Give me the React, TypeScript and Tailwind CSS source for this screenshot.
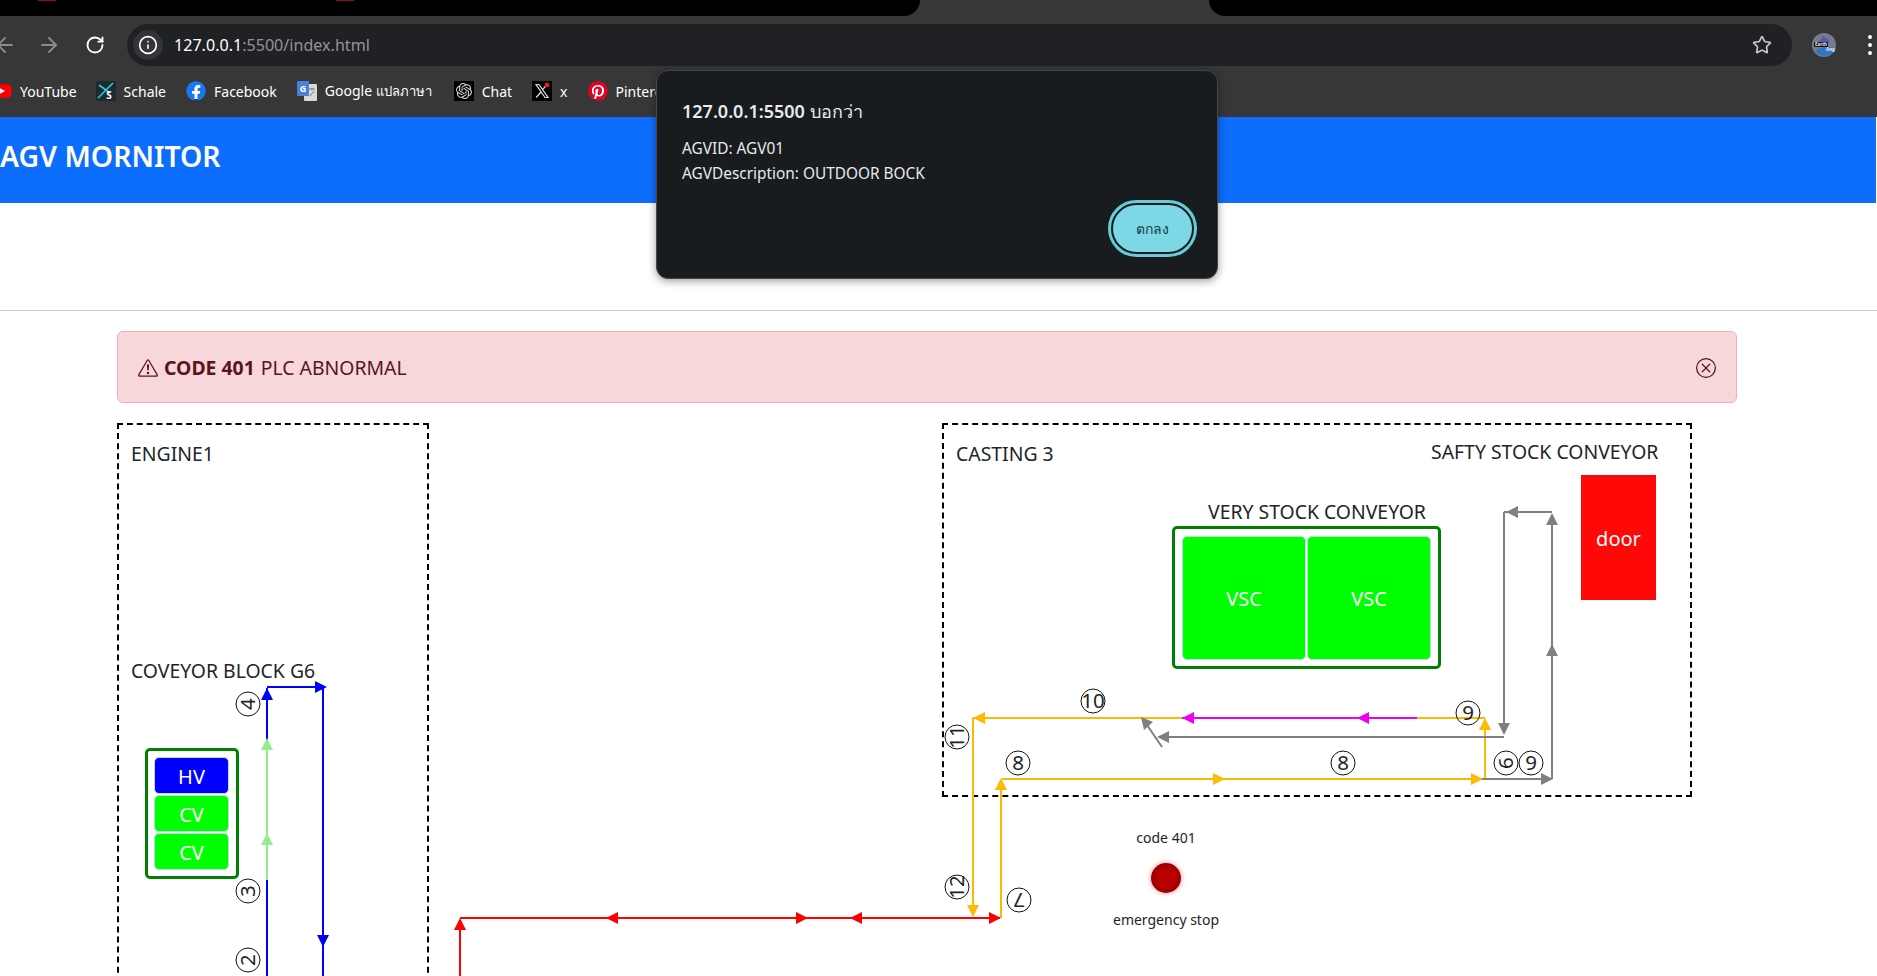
import React from 'react';
import { ArrowLeft, ArrowRight, RotateCw, Info, Star } from 'lucide-react';
import { BsExclamationTriangle, BsXCircle } from 'react-icons/bs';
import { FaFacebook, FaPinterest, FaYoutube } from 'react-icons/fa';
import { SiOpenai } from 'react-icons/si';

type Dir = 'up' | 'down' | 'left' | 'right';

const BLUE = '#0000ff';
const GREEN = '#90ee90';
const RED = '#ff0000';
const AMBER = '#ffb900';
const PINK = '#ee00ee';
const GREY = '#808080';

// [x1, y1, x2, y2, colour], page coordinates
const lines: [number, number, number, number, string][] = [
	[267, 688, 267, 976, BLUE],
	[267, 687, 320, 687, BLUE],
	[323, 687, 323, 976, BLUE],
	[267, 745, 267, 880, GREEN],
	[460, 925, 460, 976, RED],
	[460, 918, 1000, 918, RED],
	[973, 718, 973, 910, AMBER],
	[1001, 785, 1001, 918, AMBER],
	[973, 718, 1182, 718, AMBER],
	[1182, 718, 1417, 718, PINK],
	[1417, 718, 1485, 718, AMBER],
	[1485, 725, 1485, 779, AMBER],
	[1002, 779, 1480, 779, AMBER],
	[1480, 779, 1548, 779, GREY],
	[1552, 779, 1552, 520, GREY],
	[1552, 512, 1504, 512, GREY],
	[1504, 512, 1504, 730, GREY],
	[1504, 737, 1160, 737, GREY],
	[1162, 747, 1145, 722, GREY],
];

// [tip x, tip y, direction, colour]
const heads: [number, number, Dir, string][] = [
	[267, 688, 'up', BLUE],
	[327, 687, 'right', BLUE],
	[323, 947, 'down', BLUE],
	[267, 738, 'up', GREEN],
	[267, 833, 'up', GREEN],
	[460, 918, 'up', RED],
	[606, 918, 'left', RED],
	[808, 918, 'right', RED],
	[850, 918, 'left', RED],
	[1001, 918, 'right', RED],
	[973, 917, 'down', AMBER],
	[1001, 778, 'up', AMBER],
	[973, 718, 'left', AMBER],
	[1182, 718, 'left', PINK],
	[1357, 718, 'left', PINK],
	[1485, 718, 'up', AMBER],
	[1225, 779, 'right', AMBER],
	[1483, 779, 'right', AMBER],
	[1553, 779, 'right', GREY],
	[1552, 644, 'up', GREY],
	[1552, 513, 'up', GREY],
	[1506, 512, 'left', GREY],
	[1504, 735, 'down', GREY],
	[1157, 737, 'left', GREY],
];

// [centre x, centre y, text, rotation]
const marks: [number, number, string, number][] = [
	[248, 704, '4', -90],
	[248, 891, '3', -90],
	[248, 960, '2', -90],
	[1093, 701, '10', 0],
	[957, 737, '11', -90],
	[1018, 763, '8', 0],
	[1343, 763, '8', 0],
	[1468, 713, '9', 0],
	[1506, 763, '6', -90],
	[1531, 763, '9', 0],
	[957, 887, '12', -90],
	[1019, 900, '7', 180],
];

function headPoints(x: number, y: number, dir: Dir) {
	const l = 12;
	const w = 6;
	if (dir === 'up') return `${x},${y} ${x - w},${y + l} ${x + w},${y + l}`;
	if (dir === 'down') return `${x},${y} ${x - w},${y - l} ${x + w},${y - l}`;
	if (dir === 'left') return `${x},${y} ${x + l},${y - w} ${x + l},${y + w}`;
	return `${x},${y} ${x - l},${y - w} ${x - l},${y + w}`;
}

function Routes() {
	return (
		<svg className="absolute inset-0 w-[1877px] h-[553px]" viewBox="0 423 1877 553">
			{lines.map(([x1, y1, x2, y2, c], i) => (
				<line key={i} x1={x1} y1={y1} x2={x2} y2={y2} stroke={c} strokeWidth={2} />
			))}
			{heads.map(([x, y, d, c], i) => (
				<polygon key={i} points={headPoints(x, y, d)} fill={c} />
			))}
			<polygon points="1141,717 1153,722 1144,730" fill={GREY} />
			{marks.map(([x, y, t, r], i) => (
				<g key={i} transform={`rotate(${r} ${x} ${y})`}>
					<circle cx={x} cy={y} r={12} fill="none" stroke="#111" strokeWidth={1} />
					<text x={x} y={y + 7} textAnchor="middle" fontSize={20.5} fill="#212529">{t}</text>
				</g>
			))}
		</svg>
	);
}

function Block({ label, color, className }: { label: string; color: string; className: string }) {
	return (
		<div className={`flex items-center justify-center pt-0.5 rounded-[5px] border border-[#b9dbe6] text-white text-[20px] ${color} ${className}`}>
			{label}
		</div>
	);
}

function Bookmark({ icon, children, className }: { icon: React.ReactNode; children: React.ReactNode; className: string }) {
	return (
		<div className={`flex items-center shrink-0 text-white text-[14px] ${className}`}>
			<div className="flex items-center justify-center w-5 h-5 shrink-0">{icon}</div>
			<span className="ml-2 whitespace-nowrap">{children}</span>
		</div>
	);
}

function Chrome() {
	return (
		<div className="shrink-0 bg-[#373737]">
			{/* tab strip */}
			<div className="flex h-4">
				<div className="relative w-[920px] bg-black rounded-br-[16px]">
					<div className="absolute left-[38px] top-0 w-[18px] h-px bg-[#8a1010]" />
					<div className="absolute left-[336px] top-0 w-[18px] h-px bg-[#8a1010]" />
				</div>
				<div className="flex-1" />
				<div className="w-[668px] bg-black rounded-bl-[16px]" />
			</div>
			{/* address row */}
			<div className="flex items-center h-[42px] mt-2">
				<ArrowLeft size={24} strokeWidth={1.8} className="-ml-[7px] shrink-0 text-[#8c8c8c]" />
				<ArrowRight size={24} strokeWidth={1.8} className="ml-5 shrink-0 text-[#8c8c8c]" />
				<RotateCw size={20} strokeWidth={2.2} className="ml-6 shrink-0 text-white" />
				<div className="flex items-center flex-1 h-full ml-[22px] pl-1.5 pr-5 rounded-full bg-[#202124]">
					<div className="flex items-center justify-center w-[30px] h-[30px] rounded-full bg-[#333437]">
						<Info size={20} strokeWidth={2} className="text-white" />
					</div>
					<div className="ml-[11px] mt-px text-[16.1px] text-white">
						127.0.0.1<span className="text-[#939393]">:5500/index.html</span>
					</div>
					<Star size={20} strokeWidth={2} className="ml-auto text-[#c7c7c7]" />
				</div>
				<div className="flex items-center w-[85px] shrink-0 pl-5">
					<svg width="24" height="24" viewBox="0 0 24 24" className="shrink-0">
						<circle cx="12" cy="12" r="12" fill="#787c88" />
						<path d="M3 17 Q12 12 23 15 L20 21 Q12 25 6 21 Z" fill="#2f76c9" />
						<path d="M7 9 L11 3 L16 6 L18 9 Z" fill="#5f55c0" />
						<rect x="2" y="9" width="14" height="5" fill="#111" />
						<text x="9" y="13" textAnchor="middle" fontSize="4.5" fontWeight="700" fill="#eee">Earth</text>
						<text x="18.5" y="18" textAnchor="middle" fontSize="4.5" fontWeight="700" fill="#eee">Ang</text>
					</svg>
					<div className="flex flex-col gap-[4px] ml-auto mr-[5px]">
						<div className="w-1 h-1 rounded-full bg-white" />
						<div className="w-1 h-1 rounded-full bg-white" />
						<div className="w-1 h-1 rounded-full bg-white" />
					</div>
				</div>
			</div>
			{/* bookmarks */}
			<div className="flex items-center h-[51px] pb-px overflow-hidden">
				<Bookmark
					className="-ml-2"
					icon={
						<div className="relative flex items-center justify-center">
							<div className="absolute w-2 h-2 bg-white" />
							<FaYoutube size={20} className="relative text-[#ff0000]" />
						</div>
					}
				>
					YouTube
				</Bookmark>
				<Bookmark
					className="ml-[19px]"
					icon={
						<svg width="20" height="20" viewBox="0 0 20 20">
							<rect width="20" height="20" rx="2" fill="#1d2a30" />
							<path d="M2 17 L17 2 M3 4 L14 12" stroke="#35c6e0" strokeWidth="1.6" />
							<text x="13" y="18" textAnchor="middle" fontSize="10" fontWeight="700" fill="#fff">S</text>
						</svg>
					}
				>
					Schale
				</Bookmark>
				<Bookmark
					className="ml-5"
					icon={
						<div className="relative flex items-center justify-center">
							<div className="absolute w-3 h-4 bg-white" />
							<FaFacebook size={20} className="relative text-[#1877f2]" />
						</div>
					}
				>
					Facebook
				</Bookmark>
				<Bookmark
					className="ml-5"
					icon={
						<svg width="20" height="22" viewBox="0 0 20 22">
							<rect x="7" y="4" width="13" height="17" rx="1" fill="#d9d9d9" />
							<path d="M12 9h6M15 8v2M13 16l4-5" stroke="#777" strokeWidth="1" fill="none" />
							<rect x="0" y="1" width="12" height="15" rx="1" fill="#4a7fe0" />
							<text x="6" y="12" textAnchor="middle" fontSize="9" fontWeight="700" fill="#fff">G</text>
						</svg>
					}
				>
					Google <span className="text-[13px]">แปลภาษา</span>
				</Bookmark>
				<Bookmark
					className="ml-[22px]"
					icon={
						<div className="flex items-center justify-center w-5 h-5 bg-black">
							<SiOpenai size={16} className="text-[#d8d8d8]" />
						</div>
					}
				>
					Chat
				</Bookmark>
				<Bookmark
					className="ml-5"
					icon={
						<svg width="20" height="20" viewBox="0 0 20 20">
							<rect width="20" height="20" fill="#000" />
							<path d="M4 3.5 L7 3.5 L16 16.5 L13 16.5 Z" fill="none" stroke="#ddd" strokeWidth="1.2" />
							<path d="M15 3.5 L10.6 8.6 M9 11 L4.2 16.5" stroke="#ddd" strokeWidth="1.2" />
							<circle cx="15" cy="4" r="2.4" fill="#f01020" />
						</svg>
					}
				>
					x
				</Bookmark>
				<Bookmark
					className="ml-5"
					icon={
						<div className="relative flex items-center justify-center">
							<div className="absolute w-3 h-4 bg-white" />
							<FaPinterest size={20} className="relative text-[#e60023]" />
						</div>
					}
				>
					Pinterest
				</Bookmark>
			</div>
		</div>
	);
}

function AlertDialog() {
	return (
		<div className="absolute left-[656px] top-[70px] w-[562px] h-[209px] flex flex-col px-[25px] rounded-[12px] border border-[#44484b] bg-[#181c1f] text-[#e8eaed] shadow-[0_2px_8px_rgba(0,0,0,0.4)]">
			<div className="mt-[28px] text-[18px] leading-6">
				<span className="font-semibold">127.0.0.1:5500</span> บอกว่า
			</div>
			<div className="mt-[13px] text-[15.4px] leading-[25px]">AGVID: AGV01</div>
			<div className="text-[15.4px] leading-[25px]">AGVDescription: OUTDOOR BOCK</div>
			<div className="flex justify-end mt-[14px] -mr-[5px]">
				<div className="w-[89px] h-[57px] p-[2px] rounded-full border-[3px] border-[#67cbd9]">
					<div className="flex items-center justify-center w-full h-full rounded-full bg-[#7dd8e5] text-[14px] text-[#143a44]">
						ตกลง
					</div>
				</div>
			</div>
		</div>
	);
}

export default function App() {
	return (
		<div className="relative flex flex-col h-[976px] overflow-hidden bg-white text-[#212529] font-['Noto_Sans','DejaVu_Sans',sans-serif]">
			<Chrome />
			<div className="shrink-0 flex items-center w-[1876px] h-[86px] pb-2 bg-[#0d6efd] text-white text-[28.4px] font-semibold">
				AGV MORNITOR
			</div>
			<div className="shrink-0 h-[107px]" />
			<div className="shrink-0 h-px bg-[#cccccc]" />
			<div className="shrink-0 flex items-center w-[1620px] h-[72px] mt-5 ml-[117px] pl-5 pr-5 pt-px rounded-md border border-[#f1aeb5] bg-[#f8d7da] text-[#58151c] text-[19.4px]">
				<BsExclamationTriangle size={20} />
				<b className="ml-1.5 font-bold">CODE 401</b>
				<span className="ml-[6px]">PLC ABNORMAL</span>
				<BsXCircle size={20} className="ml-auto" />
			</div>
			{/* diagram canvas, nodes are placed by their page position */}
			<div className="relative flex-1 mt-5 text-[19.4px]">
				<div className="absolute left-[117px] top-0 w-[312px] h-[600px] border-2 border-dashed border-black" />
				<div className="absolute left-[942px] top-0 w-[750px] h-[374px] border-2 border-dashed border-black" />
				<div className="absolute left-[131px] top-[16px]">ENGINE1</div>
				<div className="absolute left-[131px] top-[233px]">COVEYOR BLOCK G6</div>
				<div className="absolute left-[145px] top-[325px] flex flex-col gap-px w-[94px] h-[131px] pt-[6px] pl-[6px] rounded-[5px] border-[3px] border-[#008000]">
					<Block label="HV" color="bg-[#0000ff]" className="w-[75px] h-[37px]" />
					<Block label="CV" color="bg-[#00ff00]" className="w-[75px] h-[37px]" />
					<Block label="CV" color="bg-[#00ff00]" className="w-[75px] h-[37px]" />
				</div>
				<div className="absolute left-[956px] top-[16px]">CASTING 3</div>
				<div className="absolute left-[1431px] top-[14px]">SAFTY STOCK CONVEYOR</div>
				<div className="absolute left-[1208px] top-[74px]">VERY STOCK CONVEYOR</div>
				<div className="absolute left-[1172px] top-[103px] flex gap-px w-[269px] h-[143px] pt-[7px] pl-[7px] rounded-[5px] border-[3px] border-[#008000]">
					<Block label="VSC" color="bg-[#00ff00]" className="w-[124px] h-[124px]" />
					<Block label="VSC" color="bg-[#00ff00]" className="w-[124px] h-[124px]" />
				</div>
				<div className="absolute left-[1581px] top-[52px] flex items-center justify-center w-[75px] h-[125px] pt-[3px] bg-[#ff0808] text-[20px] text-white">
					door
				</div>
				<div className="absolute left-[1086px] top-[405px] flex flex-col items-center w-[160px] text-[14px] leading-5">
					<div>code 401</div>
					<div className="w-[30px] h-[30px] mt-[15px] rounded-full bg-[radial-gradient(circle,#b80000_45%,#6e0000_100%)] shadow-[0_0_5px_rgba(200,0,0,0.5)]" />
					<div className="mt-[17px]">emergency stop</div>
				</div>
				<Routes />
			</div>
			<AlertDialog />
		</div>
	);
}
